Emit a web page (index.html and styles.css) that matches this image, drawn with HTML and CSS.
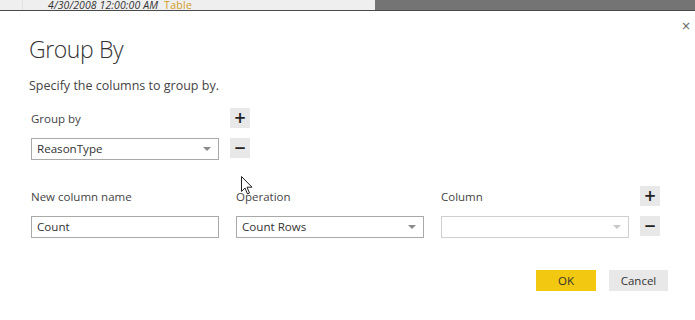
FILE: index.html
```html
<!DOCTYPE html>
<html lang="en">
<head>
    <meta charset="UTF-8">
    <title>Group By</title>
    <link rel="stylesheet" href="styles.css">
</head>
<body>
    <div class="topbar">
        <div class="strip">
            <span class="cell-first"></span>
            <span class="date">4/30/2008 12:00:00 AM</span>
            <span class="kind">Table</span>
        </div>
        <div class="shade"></div>
    </div>

    <div class="dialog">
        <button class="close" type="button">&times;</button>
        <h1>Group By</h1>
        <p class="hint">Specify the columns to group by.</p>

        <div class="group-grid">
            <label class="field-label">Group by</label>
            <button class="sq" type="button">+</button>
            <div class="select">ReasonType<span class="caret"></span></div>
            <button class="sq" type="button">&minus;</button>
        </div>

        <div class="agg-grid">
            <label class="field-label">New column name</label>
            <label class="field-label">Operation</label>
            <label class="field-label">Column</label>
            <button class="sq" type="button">+</button>
            <div class="input">Count</div>
            <div class="select">Count Rows<span class="caret"></span></div>
            <div class="select disabled"><span class="caret"></span></div>
            <button class="sq" type="button">&minus;</button>
        </div>

        <div class="actions">
            <button class="btn ok" type="button">OK</button>
            <button class="btn cancel" type="button">Cancel</button>
        </div>

        <!-- mouse pointer caught in the capture -->
        <svg class="pointer" width="13" height="19" viewBox="0 0 13 19">
            <path d="M0.5 0.5 L0.5 15.5 L4 12 L6.5 18 L8.5 17 L6 11.2 L11 11.2 Z" fill="#fff" stroke="#222" stroke-width="1"/>
        </svg>
    </div>
</body>
</html>
```

FILE: styles.css
```css
body {
    margin: 0;
    font-family: "Open Sans", "Noto Sans", sans-serif;
    background: #fff;
    color: #333;
    width: 695px;
    height: 320px;
    overflow: hidden;
}
.topbar {
    display: flex;
    height: 10px;
    border-bottom: 1px solid #4a4a4a;
}
.strip {
    width: 375px;
    background: #efefef;
    display: flex;
    align-items: flex-start;
    font-size: 10.5px;
    line-height: 10px;
    white-space: nowrap;
}
.cell-first {
    width: 22px;
    height: 10px;
    border-right: 1px solid #e0e0e0;
    margin-right: 25px;
}
.date {
    font-style: italic;
    color: #333;
    letter-spacing: 0.1px;
}
.kind {
    color: #d39c1c;
    margin-left: 6px;
    letter-spacing: 0.3px;
}
.shade {
    flex: 1;
    background: #747474;
}
.dialog {
    position: relative;
    padding: 0 27px 0 29px;
}
.close {
    position: absolute;
    top: 8px;
    right: 4px;
    border: 0;
    background: none;
    padding: 0;
    font-family: "DejaVu Sans", sans-serif;
    font-size: 12px;
    color: #666;
    cursor: pointer;
}
h1 {
    margin: 0;
    padding-top: 21px;
    font-size: 23px;
    line-height: 34px;
    font-weight: 300;
    letter-spacing: -0.4px;
    color: #333;
}
.hint {
    margin: 11px 0 0;
    font-size: 12.5px;
    line-height: 18px;
    color: #444;
}
.field-label {
    font-size: 11.5px;
    color: #444;
    align-self: center;
}
.group-grid {
    display: grid;
    grid-template-columns: 188px 20px;
    column-gap: 11px;
    row-gap: 10px;
    margin-top: 13px;
    padding-left: 2px;
}
.agg-grid {
    display: grid;
    grid-template-columns: 188px 188px 188px 20px;
    column-gap: 17px;
    row-gap: 10px;
    margin-top: 26px;
    padding-left: 2px;
}
.agg-grid .sq {
    margin-left: -6px;
}
.sq {
    width: 20px;
    height: 20px;
    border: 0;
    padding: 0;
    background: #e8e8e8;
    color: #222;
    font-family: "DejaVu Sans", sans-serif;
    font-size: 15px;
    font-weight: bold;
    line-height: 20px;
    cursor: pointer;
}
.select, .input {
    position: relative;
    box-sizing: border-box;
    height: 22px;
    border: 1px solid #a9a9a9;
    padding: 0 5px;
    font-size: 11.6px;
    line-height: 20px;
    color: #333;
}
.select.disabled {
    border-color: #cfcfcf;
}
.caret {
    position: absolute;
    right: 7px;
    top: 8px;
    border-left: 4px solid transparent;
    border-right: 4px solid transparent;
    border-top: 4px solid #8a8a8a;
}
.disabled .caret {
    border-top-color: #c8c8c8;
}
.actions {
    display: flex;
    justify-content: flex-end;
    gap: 13px;
    margin-top: 32px;
}
.btn {
    height: 21px;
    border: 0;
    padding: 0;
    font-family: inherit;
    font-size: 11.5px;
    color: #333;
    cursor: pointer;
}
.ok {
    width: 60px;
    background: #f2c811;
}
.cancel {
    width: 59px;
    background: #e8e8e8;
}
.pointer {
    position: absolute;
    left: 241px;
    top: 165px;
}
```
